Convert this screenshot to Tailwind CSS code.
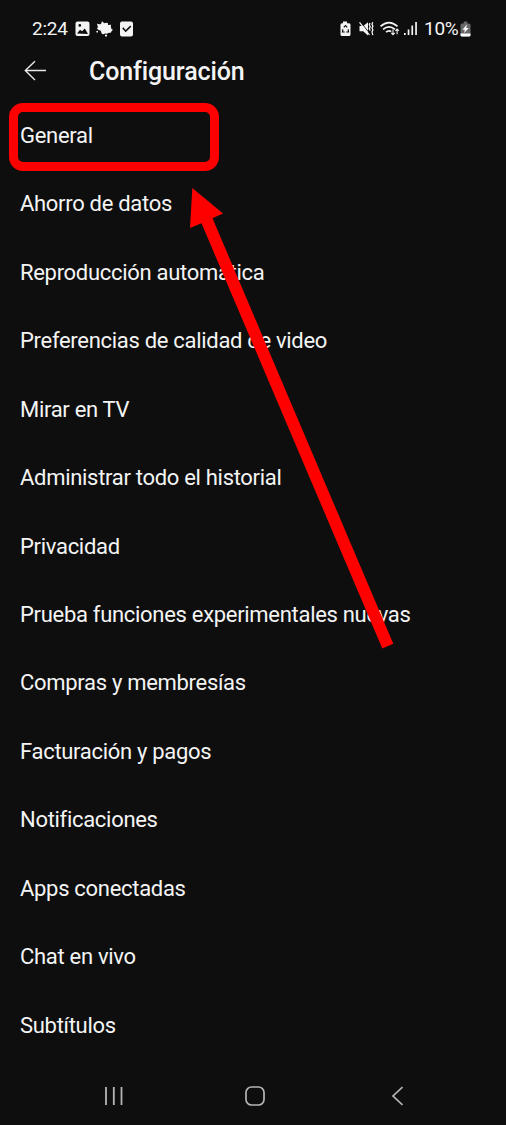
<!DOCTYPE html>
<html lang="es">
<head>
<meta charset="utf-8">
<title>Configuración</title>
<script src="https://cdn.jsdelivr.net/npm/@tailwindcss/browser@4"></script>
</head>
<body class="bg-[#0e0e0e]">
<div class="relative flex h-[1125px] w-[506px] flex-col overflow-hidden bg-[#0e0e0e] font-['Roboto',sans-serif] text-[#f4f4f4]">
  <div class="flex h-[57px] shrink-0 items-center pr-[35px] pl-8 text-[19px] leading-none tracking-[-0.25px]">
    <span class="w-[43px] whitespace-nowrap">2:24</span>
    <svg class="h-4 w-[60px]" viewBox="0 0 60 16" fill="#f4f4f4">
      <path fill-rule="evenodd" d="M2.500 .500h10q2 0 2 2v10.500q0 2-2 2h-10q-2 0-2-2V2.500q0-2 2-2ZM2 12.500 13 13 9.800 7.500 7 10.200 5 8.800ZM4.800 3a1.400 1.400 0 1 0 0 2.800a1.400 1.400 0 1 0 0-2.800Z"/>
      <path d="M27 .3 29.300 2.300Q31 1 33 2.300L33 4 36 3.800Q35.500 6 36.500 8L38 8.800Q36.500 10 35.800 11.800 33.500 11.300 32 12.800L30 12.500Q28 14 26.500 12.300L25.800 9.800Q23.500 9.500 21.800 7.300L23 6.300 22 2.800Q24.500 3.500 26 3Z"/>
      <circle cx="22.200" cy="10.700" r=".9"/><circle cx="31" cy="14.600" r="1.100"/>
      <path fill-rule="evenodd" d="M47 .500h9q2 0 2 2v11q0 2-2 2h-9q-2 0-2-2v-11q0-2 2-2ZM47.200 7.400l3.500 3.900L56.300 5.800 55.200 4.600 50.700 9 48.300 6.300Z"/>
    </svg>
    <svg class="ml-auto h-5 w-[80px] shrink-0" viewBox="0 0 80 20" fill="#f4f4f4">
      <path d="M4 2.500h4v1.700h2q1.500 0 1.500 1.500v9.800q0 1.500-1.500 1.500h-7Q1.500 17 1.500 15.500V5.700q0-1.500 1.500-1.500h1Z"/>
      <path d="M4.800 8.300 6.500 6.500 8.200 8.300M9.200 10.200 9.500 13H7.300M5.700 13H3.500L3.800 10.200" fill="none" stroke="#0e0e0e" stroke-width="1.200"/>
      <path d="M20.500 7h3.700L29 3.300v13.200l-4.800-4.300h-3.700Z"/>
      <path d="m21.700 3 9 11.500" stroke="#0e0e0e" stroke-width=".9"/><path d="m20.500 3.300 10 12.700" stroke="#f4f4f4" stroke-width="1.200"/>
      <path d="M31 4l-.7 1.800.9 1.900-.9 1.900.9 1.900M33.800 3.300l-.8 2 .9 1.900-.9 1.900.9 1.900-.9 1.900.8 3.200" fill="none" stroke="#f4f4f4" stroke-width="1.300"/>
      <path d="M41.500 7.300q8.500-7.500 17 0M44 10.300q6-5 12 0M47 13.200q3-2.400 5.200-.5" fill="none" stroke="#f4f4f4" stroke-width="1.700"/>
      <path d="M54 10.500v5m-1.700-1.700 1.700 1.900 1.700-1.900M58.100 15.200v-5m-1.700 1.700 1.700-1.900 1.700 1.900" fill="none" stroke="#f4f4f4" stroke-width="1.100"/>
      <path d="M65 14h1.700v2H65zM68.700 10.500h1.700V16h-1.700zM72.400 6.500h1.700V16h-1.700zM76.200 3h1.700v13h-1.700z"/>
    </svg>
    <span class="ml-[5px] w-[34px] whitespace-nowrap">10%</span>
    <svg class="ml-[2px] h-4 w-[11px] shrink-0" viewBox="0 0 11 16">
      <path d="M3.700.500h3.600v2H9q1.500 0 1.500 1.500v10q0 1.500-1.500 1.500H2Q.5 15.500.5 14V4Q.5 2.500 2 2.500h1.700Z" fill="#686868"/>
      <path d="M.5 12.500h10V14q0 1.500-1.500 1.500H2Q.5 15.500.5 14ZM6.800 3.500 2.500 8.700h2.300L4.200 12l4.500-5H6.300Z" fill="#fff"/>
    </svg>
  </div>
  <header class="flex h-[29px] shrink-0 items-center pl-6">
    <svg class="mb-[2px] h-[22px] w-[23px]" viewBox="0 0 23 22" fill="none" stroke="#e8e8e8" stroke-width="1.400"><path d="M22 10.500H1.300M11 1.200 1.300 10.500 11 20"/></svg>
    <h1 class="ml-[42px] text-[25px] leading-none font-medium tracking-[-0.120px] whitespace-nowrap">Configuración</h1>
  </header>
  <ul class="mt-[15.500px] flex h-[958.500px] shrink-0 flex-col pl-5 text-[22px] leading-none tracking-[-0.300px] whitespace-nowrap [&>li]:flex [&>li]:flex-1 [&>li]:items-center">
    <li>General</li>
    <li>Ahorro de datos</li>
    <li>Reproducción automática</li>
    <li>Preferencias de calidad de video</li>
    <li>Mirar en TV</li>
    <li>Administrar todo el historial</li>
    <li>Privacidad</li>
    <li>Prueba funciones experimentales nuevas</li>
    <li>Compras y membresías</li>
    <li>Facturación y pagos</li>
    <li>Notificaciones</li>
    <li>Apps conectadas</li>
    <li>Chat en vivo</li>
    <li>Subtítulos</li>
  </ul>
  <nav class="mt-[25px] flex h-[22px] shrink-0 items-center pl-[104px]">
    <svg class="h-5 w-5" viewBox="0 0 20 20" stroke="#b5b5b5" stroke-width="1.800"><path d="M2 1v18M9.800 1v18M17.500 1v18"/></svg>
    <svg class="ml-[121px] h-5 w-5" viewBox="0 0 20 20" fill="none" stroke="#b5b5b5" stroke-width="1.700"><rect x="1" y="1" width="18" height="18" rx="5.500"/></svg>
    <svg class="ml-[126px] h-5 w-[12px]" viewBox="0 0 12 20" fill="none" stroke="#b5b5b5" stroke-width="1.700"><path d="M11.500 1 2 10 11.500 19"/></svg>
  </nav>
  <div class="absolute top-[103px] left-[9px] h-[68px] w-[210px] rounded-[14px] border-9 border-[#fe0000]"></div>
  <svg class="absolute inset-0 h-[1125px] w-[506px]" viewBox="0 0 506 1125"><path d="M192.300 188 223 213.500 212.500 218.300 393.300 643.700 382.300 648.500 201.500 223.300 190 228Z" fill="#fe0000"/></svg>
</div>
</body>
</html>
